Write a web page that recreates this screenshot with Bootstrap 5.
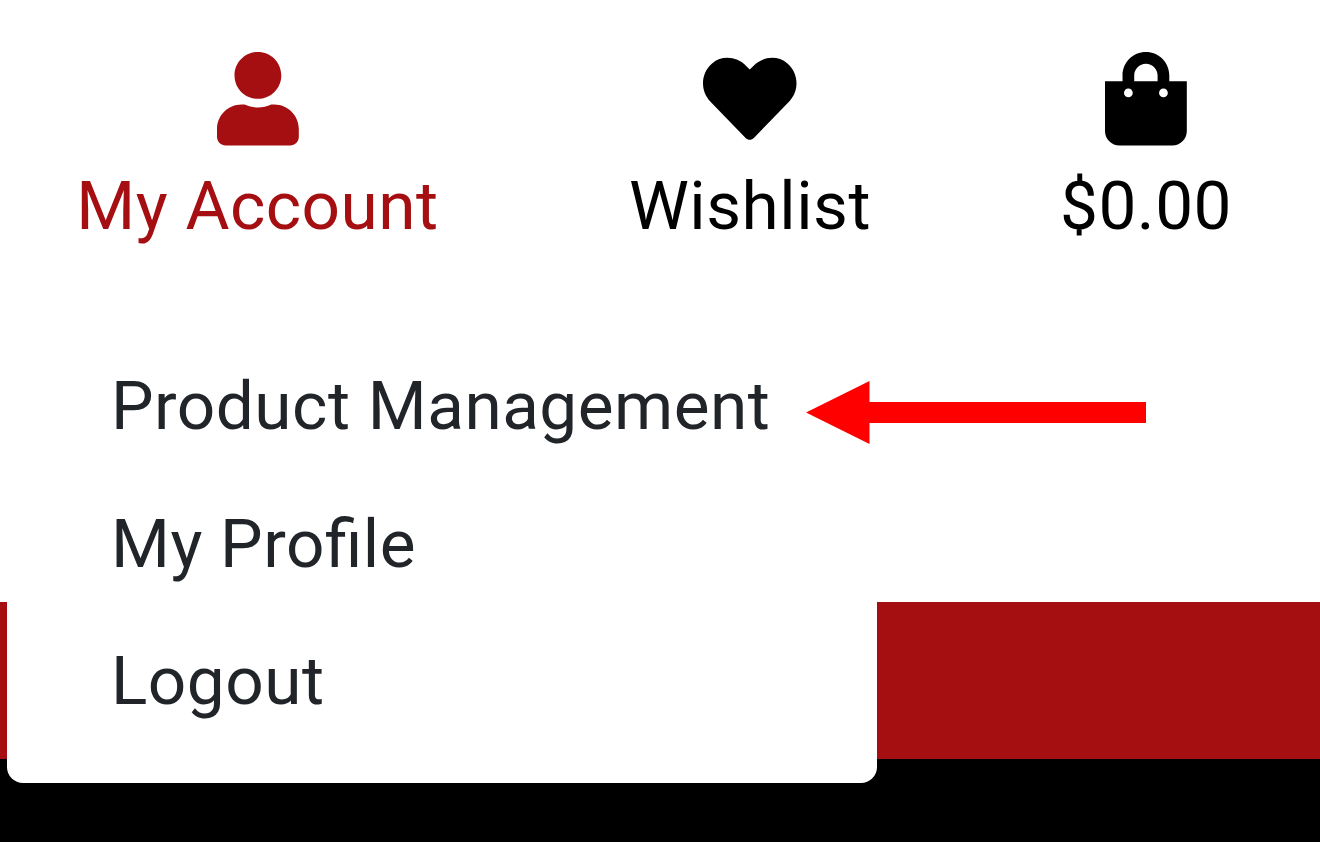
<!DOCTYPE html>
<html lang="en">
<head>
<meta charset="utf-8">
<meta name="viewport" content="width=device-width, initial-scale=1">
<title>My Account</title>
<link href="https://cdn.jsdelivr.net/npm/bootstrap@5.3.0/dist/css/bootstrap.min.css" rel="stylesheet">
<style>
body{font-family:Roboto,"Liberation Sans",sans-serif;font-size:67.5px;letter-spacing:.5px;font-feature-settings:"liga" 1;height:842px;overflow:hidden;background:#fff}
.top-area{height:601.5px;padding:52px 0 0 77px}
.shop-link{color:#000;line-height:80px;white-space:nowrap}
.shop-link:hover{color:#a50f11}
.shop-link.current{color:#a50f11}
.shop-link svg{height:93.5px;width:auto;overflow:visible;fill:currentColor}
.shop-link span{margin-top:20.5px}
.w-account{width:361px}
.w-wish{width:240px;margin-left:192px}
.w-cart{width:170px;margin-left:191px}
.red-strip{height:157.5px;background:#a50f11}
.account-menu{top:306px;left:7px;width:870px;height:477px;padding:31px 0 32px;border:0;border-radius:16px;font-size:67.5px}
.account-menu .dropdown-item{height:137.5px;line-height:137.5px;padding:0 0 0 104px;color:#212529}
.pointer-arrow{left:806px;top:381px;z-index:1001}
</style>
</head>
<body class="d-flex flex-column position-relative">
<header class="top-area flex-shrink-0">
  <nav class="d-flex">
    <a href="#" class="shop-link current w-account d-flex flex-column align-items-center text-decoration-none">
      <svg viewBox="0 0 448 512" aria-hidden="true"><path d="M224 256c70.7 0 128-57.3 128-128S294.7 0 224 0 96 57.3 96 128s57.3 128 128 128zm89.6 32h-16.7c-22.2 10.2-46.9 16-72.9 16s-50.6-5.8-72.9-16h-16.7C60.2 288 0 348.2 0 422.4V464c0 26.5 21.5 48 48 48h352c26.5 0 48-21.5 48-48v-41.6c0-74.2-60.2-134.4-134.4-134.4z"/></svg>
      <span>My Account</span>
    </a>
    <a href="#" class="shop-link w-wish d-flex flex-column align-items-center text-decoration-none">
      <svg viewBox="0 0 512 512" aria-hidden="true"><path d="M462.3 62.6C407.5 15.9 326 24.3 275.7 76.2L256 96.5l-19.7-20.3C186.1 24.3 104.5 15.9 49.7 62.6c-62.8 53.6-66.1 149.8-9.9 207.9l193.5 199.8c12.5 12.9 32.8 12.9 45.3 0l193.5-199.8c56.3-58.1 53-154.3-9.8-207.9z"/></svg>
      <span>Wishlist</span>
    </a>
    <a href="#" class="shop-link w-cart d-flex flex-column align-items-center text-decoration-none">
      <svg viewBox="0 0 448 512" aria-hidden="true"><path d="M352 160v-32C352 57.42 294.579 0 224 0 153.42 0 96 57.42 96 128v32H0v272c0 44.183 35.817 80 80 80h288c44.183 0 80-35.817 80-80V160h-96zm-192-32c0-35.29 28.71-64 64-64s64 28.71 64 64v32H160v-32zm160 120c-13.255 0-24-10.745-24-24s10.745-24 24-24 24 10.745 24 24-10.745 24-24 24zm-192 0c-13.255 0-24-10.745-24-24s10.745-24 24-24 24 10.745 24 24-10.745 24-24 24z"/></svg>
      <span>$0.00</span>
    </a>
  </nav>
</header>
<div class="red-strip flex-shrink-0"></div>
<div class="bg-black flex-grow-1"></div>
<div class="dropdown-menu account-menu show position-absolute">
  <a class="dropdown-item" href="#">Product Management</a>
  <a class="dropdown-item" href="#">My Profile</a>
  <a class="dropdown-item" href="#">Logout</a>
</div>
<svg class="pointer-arrow position-absolute" width="340" height="63" viewBox="0 0 340 63" aria-hidden="true"><path fill="#f00" d="M0 31.5 63.5 0v21H340v21H63.5v21z"/></svg>
<script src="https://cdn.jsdelivr.net/npm/bootstrap@5.3.0/dist/js/bootstrap.bundle.min.js"></script>
</body>
</html>
